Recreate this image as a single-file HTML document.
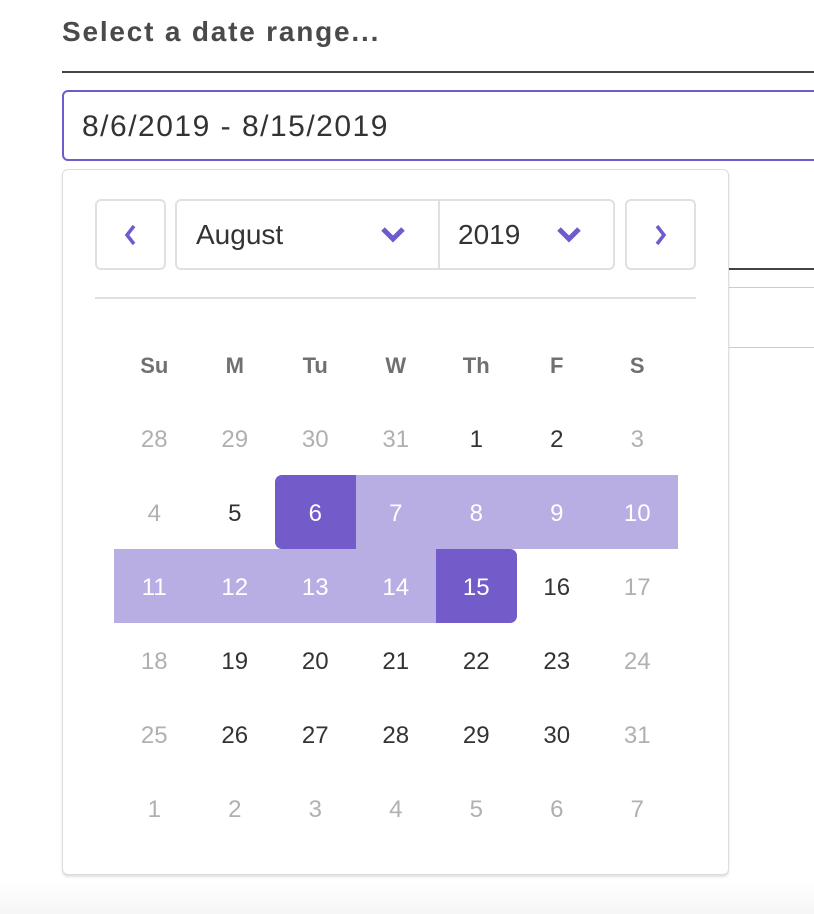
<!DOCTYPE html>
<html><head><meta charset="utf-8"><style>
*{box-sizing:border-box;margin:0;padding:0}
body{width:814px;height:914px;overflow:hidden;background:linear-gradient(#fff 0,#fff 880px,#f6f6f6 914px);font-family:"Liberation Sans",sans-serif;position:relative}
.abs{position:absolute}
h1{position:absolute;left:62px;top:16px;font-size:28px;font-weight:bold;color:#4a4a4a;letter-spacing:1.8px;white-space:nowrap}
.c{position:absolute;width:80.5px;height:74px;display:flex;align-items:center;justify-content:center;font-size:24px;color:#333;padding-top:3px}
.o{color:#b0b0b0}
.h{font-weight:bold;color:#707070;font-size:22px}
.r{background:#b8aee4;color:#fff}
.s{background:#735cc9;color:#fff}
.btn{position:absolute;border:2px solid #e0e0e0;border-radius:6px;background:#fff}
</style></head><body>
<h1>Select a date range...</h1>
<div class="abs" style="left:62px;top:71px;width:752px;height:2px;background:#444"></div>
<div class="abs" style="left:62px;top:90px;width:770px;height:71px;border:2px solid #6e5bcc;border-radius:6px"></div>
<div class="abs" style="left:82px;top:110px;font-size:30px;color:#333;letter-spacing:1.5px;white-space:nowrap">8/6/2019 - 8/15/2019</div>
<div class="abs" style="left:700px;top:268px;width:114px;height:2px;background:#444"></div>
<div class="abs" style="left:700px;top:287px;width:114px;height:1px;background:#ccc"></div>
<div class="abs" style="left:700px;top:347px;width:114px;height:1px;background:#ccc"></div>
<div class="abs" style="left:62px;top:169px;width:667px;height:706px;border:1px solid #ddd;border-radius:6px;background:#fff;box-shadow:0 2px 2px rgba(0,0,0,0.12)"></div>
<div class="btn" style="left:95px;top:199px;width:71px;height:71px"><svg width="67" height="67" class="abs" style="left:0;top:0"><path d="M37 25 L30 34 L37 43" stroke="#6e5bcc" stroke-width="3.5" fill="none"/></svg></div>
<div class="btn" style="left:175px;top:199px;width:440px;height:71px">
<div class="abs" style="left:261px;top:0;width:2px;height:67px;background:#e0e0e0"></div>
<div class="abs" style="left:19px;top:18px;font-size:28px;color:#333">August</div>
<div class="abs" style="left:281px;top:18px;font-size:28px;color:#333">2019</div>
<svg width="440" height="67" class="abs" style="left:0;top:0"><path d="M206 28 L216 38 L226 28" stroke="#6e5bcc" stroke-width="5" fill="none"/><path d="M382 28 L392 38 L402 28" stroke="#6e5bcc" stroke-width="5" fill="none"/></svg>
</div>
<div class="btn" style="left:625px;top:199px;width:71px;height:71px"><svg width="67" height="67" class="abs" style="left:0;top:0"><path d="M30 25 L37 34 L30 43" stroke="#6e5bcc" stroke-width="3.5" fill="none"/></svg></div>
<div class="abs" style="left:95px;top:297px;width:601px;height:2px;background:#e0e0e0"></div>
<div id="g"></div>
<script>
var g=document.getElementById('g'),h='';
var hd=['Su','M','Tu','W','Th','F','S'];
for(var i=0;i<7;i++)h+='<div class="c h" style="left:'+(114+i*80.5)+'px;top:327px">'+hd[i]+'</div>';
var days=[28,29,30,31,1,2,3,4,5,6,7,8,9,10,11,12,13,14,15,16,17,18,19,20,21,22,23,24,25,26,27,28,29,30,31,1,2,3,4,5,6,7];
for(var k=0;k<42;k++){var r=Math.floor(k/7),c=k%7,d=days[k],cls='c';
var inm=!(k<4||k>34);if(!inm||c==0||c==6)cls+=' o';
var st='';
if(k==9){cls='c s';st='border-radius:7px 0 0 7px;';}
else if(k==18){cls='c s';st='border-radius:0 7px 7px 0;';}
else if(k>9&&k<18){cls='c r';}
h+='<div class="'+cls+'" style="'+st+'left:'+(114+c*80.5)+'px;top:'+(401+r*74)+'px">'+d+'</div>';}
g.innerHTML=h;
</script>
</body></html>
